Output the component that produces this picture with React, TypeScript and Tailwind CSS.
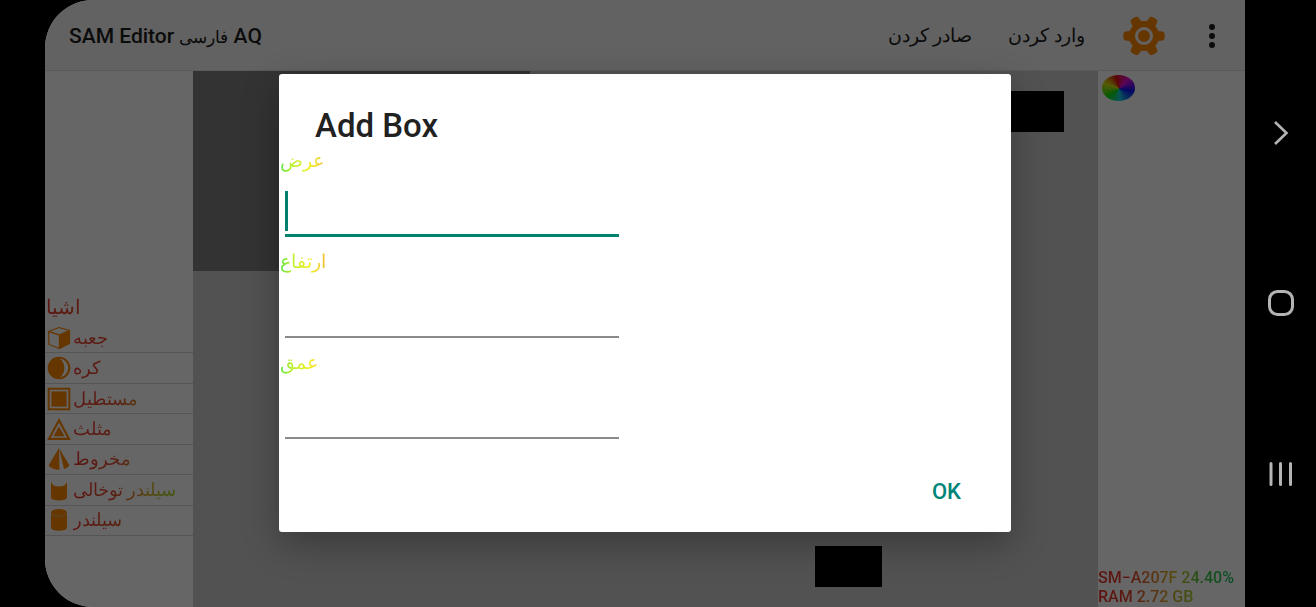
import type { ReactNode } from "react";

const ORANGE = "#ff8800";

function BoxIcon() {
  return (
    <svg viewBox="0 0 24 24" className="size-6" fill="none" stroke={ORANGE} strokeWidth="1.2" strokeLinejoin="round" aria-hidden="true">
      <path d="M1.5 5.5 L12 1.5 L22.5 4.5 L12.5 9 Z" />
      <path d="M1.5 5.5 L12.5 9 V22.5 L2 18.5 Z" />
      <path d="M12.5 9 L22.5 4.5 V17.5 L12.5 22.5 Z" fill={ORANGE} />
    </svg>
  );
}

function SphereIcon() {
  return (
    <svg viewBox="0 0 24 24" className="size-6" aria-hidden="true">
      <circle cx="12" cy="12" r="11.3" fill={ORANGE} />
      <path d="M13 2.5 A9.6 9.6 0 0 1 13 21.5 A12.5 12.5 0 0 0 13 2.5 Z" fill="#fff" />
    </svg>
  );
}

function RectangleIcon() {
  return (
    <svg viewBox="0 0 24 24" className="size-6" aria-hidden="true">
      <rect x="1.7" y="1.7" width="20.6" height="20.6" fill="none" stroke={ORANGE} strokeWidth="2" />
      <rect x="4.4" y="4.4" width="15.2" height="15.2" fill={ORANGE} />
    </svg>
  );
}

function TriangleIcon() {
  return (
    <svg viewBox="0 0 24 24" className="size-6" aria-hidden="true">
      <path d="M12 3.2 L22 21.8 H2 Z" fill="none" stroke={ORANGE} strokeWidth="2.2" />
      <path d="M12 9.5 L17.5 19.2 H6.5 Z" fill={ORANGE} />
    </svg>
  );
}

function ConeIcon() {
  return (
    <svg viewBox="0 0 24 24" className="size-6" aria-hidden="true">
      <path d="M12 1 L12.5 23 Q5 22.5 1.5 18.5 Z" fill={ORANGE} />
      <path d="M12 1 L22.5 18.5 Q20.5 20.8 17 22 Z" fill={ORANGE} />
    </svg>
  );
}

function HollowCylinderIcon() {
  return (
    <svg viewBox="0 0 24 24" className="size-6" aria-hidden="true">
      <path d="M4 3 Q4.5 8.5 12 8.5 Q19.5 8.5 20 3 V19.5 Q19.5 22.5 12 22.5 Q4.5 22.5 4 19.5 Z" fill={ORANGE} />
    </svg>
  );
}

function CylinderIcon() {
  return (
    <svg viewBox="0 0 24 24" className="size-6" aria-hidden="true">
      <path d="M4 4.5 Q4.5 1 12 1 Q19.5 1 20 4.5 V19.5 Q19.5 22.8 12 22.8 Q4.5 22.8 4 19.5 Z" fill={ORANGE} />
      <path d="M4 5 Q5 8.2 12 8.2 Q19 8.2 20 5" fill="none" stroke="#d9c2a0" strokeWidth="0.8" />
    </svg>
  );
}

const shapes: { name: string; icon: ReactNode }[] = [
  { name: "جعبه", icon: <BoxIcon /> },
  { name: "کره", icon: <SphereIcon /> },
  { name: "مستطیل", icon: <RectangleIcon /> },
  { name: "مثلث", icon: <TriangleIcon /> },
  { name: "مخروط", icon: <ConeIcon /> },
  { name: "سیلندر توخالی", icon: <HollowCylinderIcon /> },
  { name: "سیلندر", icon: <CylinderIcon /> },
];

const rainbow =
  "bg-[linear-gradient(90deg,#e8382e_0px,#e0502e_45px,#d8b02a_75px,#a8d82a_100px)] bg-clip-text text-transparent";

const fields = [
  { id: "width", label: "عرض", active: true },
  { id: "height", label: "ارتفاع", active: false },
  { id: "depth", label: "عمق", active: false },
];

function GearIcon() {
  return (
    <svg viewBox="0 0 42 42" className="size-[42px]" aria-hidden="true">
      <g fill={ORANGE}>
        <circle cx="21" cy="21" r="15" />
        {[0, 60, 120, 180, 240, 300].map((a) => (
          <path
            key={a}
            d="M32 12.5 L35 16 L39.5 16.4 Q41.8 16.8 41.8 21 Q41.8 25.2 39.5 25.6 L35 26 L32 29.5 Z"
            transform={`rotate(${a} 21 21)`}
          />
        ))}
      </g>
      <circle cx="21" cy="21" r="7.5" fill="none" stroke="#f5f5f5" strokeWidth="3" />
    </svg>
  );
}

function TopBar() {
  return (
    <header className="flex h-[71px] shrink-0 items-center border-b border-[#e0e0e0] bg-[#f5f5f5] pt-[2px] pr-[21px] pl-6 text-[#1c1c1c]">
      <h1 className="pt-[2px] text-[21px] font-medium">
        SAM Editor <span className="text-[17px] font-normal">فارسی</span> AQ
      </h1>
      <nav className="ml-auto flex items-center">
        <button type="button" className="mr-9 text-[19px]">صادر کردن</button>
        <button type="button" className="mr-[38px] text-[19px]">وارد کردن</button>
        <button type="button" aria-label="Settings" className="mr-[35px]">
          <GearIcon />
        </button>
        <button type="button" aria-label="More options">
          <svg viewBox="0 0 24 24" className="size-6" fill="#1c1c1c" aria-hidden="true">
            <circle cx="12" cy="3" r="3" />
            <circle cx="12" cy="12" r="3" />
            <circle cx="12" cy="21" r="3" />
          </svg>
        </button>
      </nav>
    </header>
  );
}

function ShapeList() {
  return (
    <aside className="flex w-[148px] shrink-0 flex-col justify-end bg-white pb-[71px]">
      <h2 className="px-px text-[20px] leading-[32px]">
        <span className={rainbow}>اشیا</span>
      </h2>
      <ul className="grid h-[213px] grid-rows-7">
        {shapes.map((s) => (
          <li key={s.name} className="border-b border-[#d4d4d4]">
            <button type="button" className="flex h-full w-full items-center gap-[2px] pl-[2px] text-[18px] leading-none">
              {s.icon}
              <span className={`py-1 ${rainbow}`}>{s.name}</span>
            </button>
          </li>
        ))}
      </ul>
    </aside>
  );
}

function Canvas() {
  return (
    <main className="relative flex-1 bg-[#cdcdcd]">
      <div className="absolute top-0 left-0 h-[200px] w-[337px] bg-[#808080]" />
      <div className="absolute top-5 right-[34px] h-[41px] w-[67px] bg-black" />
      <div className="absolute right-[216px] bottom-5 h-[41px] w-[67px] bg-black" />
    </main>
  );
}

function RightPanel() {
  return (
    <aside className="flex w-[147px] shrink-0 flex-col justify-between bg-white pb-px">
      <button
        type="button"
        aria-label="Pick a colour"
        className="mt-1 ml-1 h-[26px] w-[33px] rounded-[50%] bg-[conic-gradient(from_-15deg_at_52%_52%,#e01010,#e010e0_60deg,#1010f0_115deg,#10d0e0_190deg,#10e010_250deg,#d8e010_305deg,#e01010)]"
      />
      <div className="flex flex-col items-start text-[16px] leading-[19px] font-medium">
        <span className="bg-[linear-gradient(90deg,#e8302a_0px,#e04a2e_35px,#d8c02a_78px,#40c840_105px,#10c060_137px)] bg-clip-text whitespace-nowrap text-transparent">
          SM−A207F 24.40%
        </span>
        <span className="bg-[linear-gradient(90deg,#e8302a_0px,#e04a2e_35px,#d8a02a_68px,#a0d030_97px)] bg-clip-text whitespace-nowrap text-transparent">
          RAM 2.72 GB
        </span>
      </div>
    </aside>
  );
}

function AddBoxDialog() {
  return (
    <div className="absolute inset-0 flex items-center justify-center bg-black/60 pb-[2px]">
      <form
        role="dialog"
        aria-labelledby="dialog-title"
        className="w-[61%] rounded-[3px] bg-white shadow-[0_12px_36px_rgba(0,0,0,0.3)]"
        onSubmit={(e) => e.preventDefault()}
      >
        <h2 id="dialog-title" className="px-9 pt-8 text-[33px] leading-10 font-medium text-[#212121]">
          Add Box
        </h2>
        {fields.map((f) => (
          <div key={f.id} className="flex h-[101px] flex-col items-start">
            <label
              htmlFor={f.id}
              className="bg-[linear-gradient(90deg,#50e040_0px,#b8f030_12px,#f0f020_30px,#f0a030_56px)] bg-clip-text px-px text-[19px] leading-[30px] text-transparent"
            >
              {f.label}
            </label>
            <div className="relative ml-[6px] w-[334px]">
              <input
                id={f.id}
                type="text"
                className={
                  f.active
                    ? "block h-[61px] w-full border-b-3 border-[#00806f] caret-transparent outline-none"
                    : "block h-[61px] w-full border-b-2 border-[#8a8a8a] outline-none"
                }
              />
              {f.active && <span className="absolute bottom-[6px] left-0 h-10 w-[3px] bg-[#00806f]" />}
            </div>
          </div>
        ))}
        <div className="flex justify-end px-9 pt-[17px] pb-[15px]">
          <button type="submit" className="h-[51px] px-[14px] text-[22px] font-medium text-[#008577]">
            OK
          </button>
        </div>
      </form>
    </div>
  );
}

function SystemNav() {
  return (
    <nav className="flex w-[71px] shrink-0 flex-col items-center justify-around py-12 text-[#b4b4b4]">
      <button type="button" aria-label="Back">
        <svg viewBox="0 0 28 28" className="size-7" fill="none" stroke="currentColor" strokeWidth="2.6" aria-hidden="true">
          <path d="M8 3 L19.5 14 L8 25" />
        </svg>
      </button>
      <button type="button" aria-label="Home">
        <svg viewBox="0 0 28 28" className="size-7" fill="none" stroke="currentColor" strokeWidth="3" aria-hidden="true">
          <rect x="2.5" y="2.5" width="23" height="23" rx="8" />
        </svg>
      </button>
      <button type="button" aria-label="Recent apps">
        <svg viewBox="0 0 28 28" className="size-7" stroke="currentColor" strokeWidth="3" strokeLinecap="round" aria-hidden="true">
          <path d="M4 3.5 V24.5 M13.5 3.5 V24.5 M23.5 3.5 V24.5" />
        </svg>
      </button>
    </nav>
  );
}

export default function App() {
  return (
    <div className="flex min-h-screen bg-black pl-[45px] font-[Roboto,'Noto_Sans',sans-serif]">
      <div className="relative flex flex-1 flex-col overflow-hidden rounded-l-[48px]">
        <TopBar />
        <div className="flex flex-1">
          <ShapeList />
          <Canvas />
          <RightPanel />
        </div>
        <AddBoxDialog />
      </div>
      <SystemNav />
    </div>
  );
}
